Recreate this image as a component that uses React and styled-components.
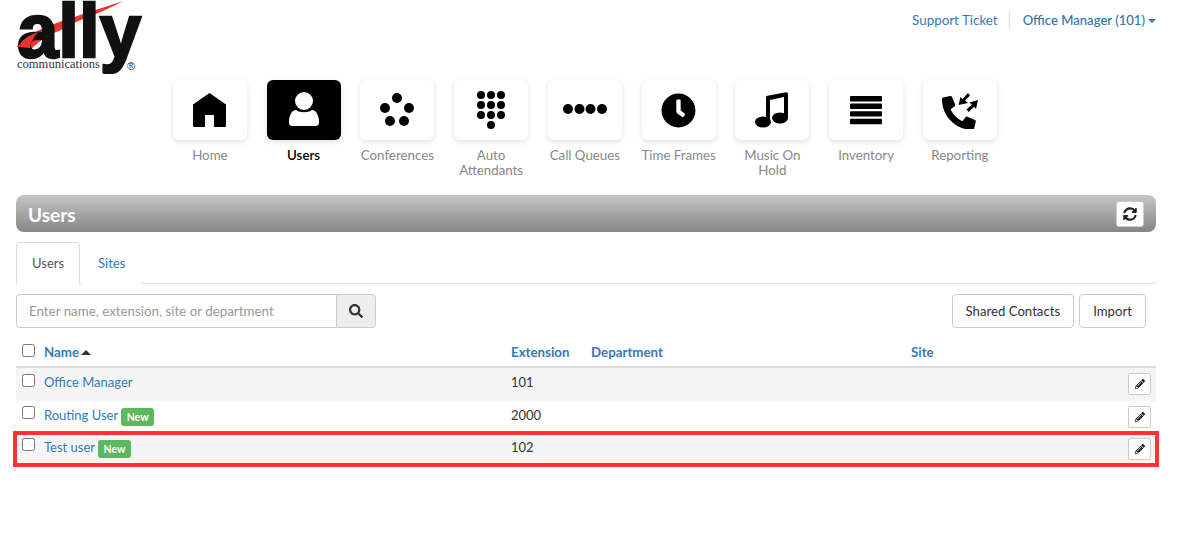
import React from "react";
import styled, { createGlobalStyle } from "styled-components";
import { FaClock, FaSearch, FaPencilAlt, FaSyncAlt } from "react-icons/fa";

const Global = createGlobalStyle`
  html, body { margin: 0; padding: 0; background: #fff; }
  body { font-family: "Lato", "Noto Sans", sans-serif; font-size: 13px; color: #333; }
`;

const Page = styled.div`
  width: 1140px;
  padding: 0 45px 40px 16px;
`;

const Top = styled.header`
  display: flex;
  justify-content: space-between;
  height: 80px;
`;

const Logo = styled.svg`
  width: 130px;
  height: 74px;
  display: block;
`;

const UserLinks = styled.div`
  display: flex;
  align-items: center;
  height: 14px;
  margin-top: 13px;
  color: #337ab7;
`;

const TopLink = styled.a`
  color: #337ab7;
  font-size: 13.4px;
  padding-right: 11px;
  border-right: 1px solid #ddd;
  margin-right: 13px;
`;

const Account = styled.a`
  color: #2f74ad;
  font-size: 13.1px;
  font-weight: 500;
`;

const Caret = styled.span`
  display: inline-block;
  width: 0;
  height: 0;
  margin-left: 3px;
  vertical-align: 2px;
  border-top: 4px solid #337ab7;
  border-left: 4px solid transparent;
  border-right: 4px solid transparent;
`;

const Nav = styled.nav`
  display: flex;
  padding-left: 147px;
  height: 115px;
`;

const NavItem = styled.a`
  width: 93.75px;
  display: flex;
  flex-direction: column;
  align-items: center;
  text-align: center;
  font-size: 13.3px;
  line-height: 15px;
  color: ${(p) => (p.$active ? "#000" : "#888")};
  font-weight: ${(p) => (p.$active ? 600 : 400)};
`;

const Tile = styled.div`
  width: 74px;
  height: 60px;
  margin-bottom: 8px;
  border-radius: 6px;
  display: flex;
  align-items: center;
  justify-content: center;
  background: ${(p) => (p.$active ? "#000" : "#fff")};
  color: ${(p) => (p.$active ? "#fff" : "#000")};
  box-shadow: 0 2px 5px rgba(40, 40, 70, 0.14);
`;

const NavLabel = styled.span`
  width: 80px;
`;

const TitleBar = styled.div`
  height: 37px;
  box-sizing: border-box;
  padding: 0 12px;
  border-radius: 8px;
  display: flex;
  align-items: center;
  justify-content: space-between;
  background: linear-gradient(#c6c6c6, #868686);
`;

const Title = styled.h1`
  margin: 1px 0 0;
  font-size: 19px;
  font-weight: 700;
  color: #fff;
`;

const RefreshButton = styled.button`
  width: 28px;
  height: 26px;
  padding: 0;
  border: 1px solid #ccc;
  border-radius: 3px;
  background: #fff;
  color: #222;
  display: flex;
  align-items: center;
  justify-content: center;
`;

const Tabs = styled.div`
  display: flex;
  margin-top: 10px;
  height: 41px;
  border-bottom: 1px solid #ddd;
`;

const Tab = styled.a`
  height: 42px;
  box-sizing: border-box;
  padding: 0 15px;
  margin-right: 2px;
  display: flex;
  align-items: center;
  border-radius: 4px 4px 0 0;
  border: 1px solid ${(p) => (p.$active ? "#ddd" : "transparent")};
  border-bottom-color: ${(p) => (p.$active ? "#fff" : "transparent")};
  color: ${(p) => (p.$active ? "#555" : "#337ab7")};
  background: #fff;
`;

const Toolbar = styled.div`
  display: flex;
  justify-content: space-between;
  padding: 10px 10px 0 0;
`;

const Search = styled.div`
  display: flex;
  width: 360px;
  height: 34px;
`;

const SearchInput = styled.input`
  flex: 1;
  min-width: 0;
  box-sizing: border-box;
  padding: 0 12px 1px;
  border: 1px solid #ccc;
  border-right: 0;
  border-radius: 4px 0 0 4px;
  font: inherit;
  font-size: 13.35px;
  outline: none;
  &::placeholder { color: #999; opacity: 1; }
`;

const SearchButton = styled.button`
  width: 40px;
  padding: 0;
  border: 1px solid #ccc;
  border-radius: 0 4px 4px 0;
  background: #eee;
  color: #333;
  display: flex;
  align-items: center;
  justify-content: center;
`;

const Actions = styled.div`
  display: flex;
  gap: 5px;
`;

const Button = styled.button`
  height: 34px;
  padding: 0 13px 1px;
  border: 1px solid #ccc;
  border-radius: 4px;
  background: #fff;
  color: #333;
  font: inherit;
  font-size: 13.2px;
`;

const Row = styled.div`
  display: grid;
  grid-template-columns: 28px 467px 80px 320px 1fr 40px;
  align-items: center;
  box-sizing: border-box;
  height: ${(p) => p.$h}px;
  background: ${(p) => (p.$shade ? "#f5f5f5" : "#fff")};
  ${(p) =>
    p.$flagged &&
    `position: relative;
     margin-top: 1px;
     box-shadow: 0 0 0 3px #f33, inset 0 0 0 1px #f33;`}
`;

const HeadRow = styled(Row)`
  margin-top: 15px;
  border-bottom: 2px solid #ddd;
  height: 25px;
  padding-bottom: 3px;
  font-size: 13.3px;
  font-weight: 700;
  color: #337ab7;
`;

const Check = styled.input.attrs({ type: "checkbox" })`
  width: 13px;
  height: 13px;
  margin: 0 0 ${(p) => p.$lift}px 6px;
`;

const HeadCell = styled.div`
  padding-bottom: 2px;
`;

const NameCell = styled.div`
  display: flex;
  align-items: center;
  gap: 3px;
`;

const NameLink = styled.a`
  color: #337ab7;
  padding-bottom: 5px;
`;

const Ext = styled.div`
  padding-bottom: 5px;
`;

const SortUp = styled.span`
  display: inline-block;
  width: 0;
  height: 0;
  margin-left: 2px;
  vertical-align: 2px;
  border-bottom: 5px solid #333;
  border-left: 5px solid transparent;
  border-right: 5px solid transparent;
`;

const Badge = styled.span`
  height: 18px;
  padding: 0 5.5px;
  border-radius: 3px;
  background: #5cb85c;
  color: #fff;
  font-size: 10.5px;
  font-weight: 700;
  line-height: 18px;
`;

const EditCell = styled.div`
  display: flex;
  justify-content: flex-end;
  padding: 0 5px 1px 0;
`;

const EditButton = styled.button`
  width: 23px;
  height: 22px;
  padding: 0;
  border: 1px solid #ccc;
  border-radius: 2px;
  background: #fff;
  color: #222;
  display: flex;
  align-items: center;
  justify-content: center;
`;

const Dots = ({ points, r }) => (
  <svg width="40" height="40" viewBox="0 0 40 40" fill="currentColor" overflow="visible">
    {points.map(([x, y]) => (
      <circle key={`${x}-${y}`} cx={x} cy={y} r={r} />
    ))}
  </svg>
);

const HomeIcon = () => (
  <svg width="33" height="34" viewBox="0 0 33 34" fill="currentColor">
    <path d="M16.5 0 L33 11.5 V32.5 Q33 34 31.5 34 H21 V22 H12 V34 H1.5 Q0 34 0 32.5 V11.5 Z" />
  </svg>
);

const UserIcon = () => (
  <svg width="34" height="38" viewBox="0 0 34 38" fill="currentColor">
    <circle cx="17" cy="10" r="9" />
    <path d="M9 19 C13 22 21 22 25 19 C29 19 32 24 32 31 C32 34 31 35 28 35 H6 C3 35 2 34 2 31 C2 24 5 19 9 19 Z" />
  </svg>
);

const MusicIcon = () => (
  <svg width="34" height="36" viewBox="0 0 34 36" fill="currentColor">
    <ellipse cx="8" cy="30" rx="8" ry="5.5" />
    <ellipse cx="25" cy="26" rx="8" ry="5.5" />
    <path d="M11 5.5 Q11 4 12.5 3.7 L31 0.2 Q33 0 33 2 V27 H29 V5 L15 8 V31 H11 Z" />
  </svg>
);

const BarsIcon = () => (
  <svg width="34" height="32" viewBox="0 0 34 32" fill="currentColor">
    {[2, 9.6, 17.2, 24.8].map((y) => (
      <rect key={y} x="1" y={y} width="32" height="5.4" rx="1" />
    ))}
  </svg>
);

const ReportingIcon = () => (
  <svg width="38" height="38" viewBox="0 0 38 38" fill="currentColor">
    <g transform="translate(1 5) scale(0.066)">
      <path d="M497.39 361.8l-112-48a24 24 0 0 0-28 6.9l-49.6 60.6A370.66 370.66 0 0 1 130.6 204.11l60.6-49.6a23.94 23.94 0 0 0 6.9-28l-48-112A24.17 24.17 0 0 0 122.6.61l-104 24A24 24 0 0 0 0 48c0 256.5 207.9 464 464 464a24 24 0 0 0 23.4-18.6l24-104a24.29 24.29 0 0 0-14.01-27.6z" />
    </g>
    <path d="M27 2 L29 4.5 L24 9.5 L27 12 L17.5 14 L19.5 6 L21.5 8 Z" />
    <path d="M37 9 L35 18 L33 15.7 L27.8 21 L25.5 18.5 L30.8 13.5 L28.5 11.5 Z" />
  </svg>
);

const items = [
  { label: "Home", icon: <HomeIcon /> },
  { label: "Users", icon: <UserIcon />, active: true },
  { label: "Conferences", icon: <Dots r={5} points={[[20, 8], [8, 18], [32, 18], [13, 31], [27, 31]]} /> },
  { label: "Auto Attendants", icon: <Dots r={4} points={[[10, 5], [20, 5], [30, 5], [10, 15], [20, 15], [30, 15], [10, 25], [20, 25], [30, 25], [20, 35]]} /> },
  { label: "Call Queues", icon: <Dots r={5} points={[[3, 19], [14.5, 19], [25.5, 19], [37, 19]]} /> },
  { label: "Time Frames", icon: <FaClock size={35} /> },
  { label: "Music On Hold", icon: <MusicIcon /> },
  { label: "Inventory", icon: <BarsIcon /> },
  { label: "Reporting", icon: <ReportingIcon /> },
];

const users = [
  { name: "Office Manager", ext: "101", shade: true, h: 33 },
  { name: "Routing User", ext: "2000", isNew: true, h: 32 },
  { name: "Test user", ext: "102", isNew: true, shade: true, flagged: true, h: 30 },
];

export default function App() {
  return (
    <Page>
      <Global />
      <Top>
        <Logo viewBox="0 0 130 74">
          <path d="M1 47 C10 30 50 20 107 1 C85 14 60 20 45 30 C30 36 20 44 14 50 Z" fill="#e8352e" />
          <text x="1" y="57" fontFamily="Liberation Sans" fontWeight="700" fontSize="76" textLength="124" lengthAdjust="spacingAndGlyphs" stroke="#111" strokeWidth="2.5" fill="#111">ally</text>
          <path d="M2 47 C6 40 13 35 22 32 C17 38 15 42 14 48 Z" fill="#e8352e" />
          <text x="1" y="68" fontFamily="Liberation Serif" fontSize="13" textLength="83" lengthAdjust="spacingAndGlyphs" fill="#333">communications</text>
          <text x="111" y="70" fontFamily="Liberation Sans" fontSize="11" fill="#333">®</text>
        </Logo>
        <UserLinks>
          <TopLink>Support Ticket</TopLink>
          <Account>Office Manager (101)<Caret /></Account>
        </UserLinks>
      </Top>
      <Nav>
        {items.map((it) => (
          <NavItem key={it.label} $active={it.active}>
            <Tile $active={it.active}>{it.icon}</Tile>
            <NavLabel>{it.label}</NavLabel>
          </NavItem>
        ))}
      </Nav>
      <TitleBar>
        <Title>Users</Title>
        <RefreshButton><FaSyncAlt size={14} /></RefreshButton>
      </TitleBar>
      <Tabs>
        <Tab $active>Users</Tab>
        <Tab>Sites</Tab>
      </Tabs>
      <Toolbar>
        <Search>
          <SearchInput placeholder="Enter name, extension, site or department" />
          <SearchButton><FaSearch size={14} /></SearchButton>
        </Search>
        <Actions>
          <Button>Shared Contacts</Button>
          <Button>Import</Button>
        </Actions>
      </Toolbar>
      <HeadRow $h={25}>
        <Check $lift={6} />
        <HeadCell>Name<SortUp /></HeadCell>
        <HeadCell>Extension</HeadCell>
        <HeadCell>Department</HeadCell>
        <HeadCell>Site</HeadCell>
        <div />
      </HeadRow>
      {users.map((u) => (
        <Row key={u.name} $h={u.h} $shade={u.shade} $flagged={u.flagged}>
          <Check $lift={9} />
          <NameCell>
            <NameLink>{u.name}</NameLink>
            {u.isNew && <Badge>New</Badge>}
          </NameCell>
          <Ext>{u.ext}</Ext>
          <div />
          <div />
          <EditCell>
            <EditButton><FaPencilAlt size={10} /></EditButton>
          </EditCell>
        </Row>
      ))}
    </Page>
  );
}
